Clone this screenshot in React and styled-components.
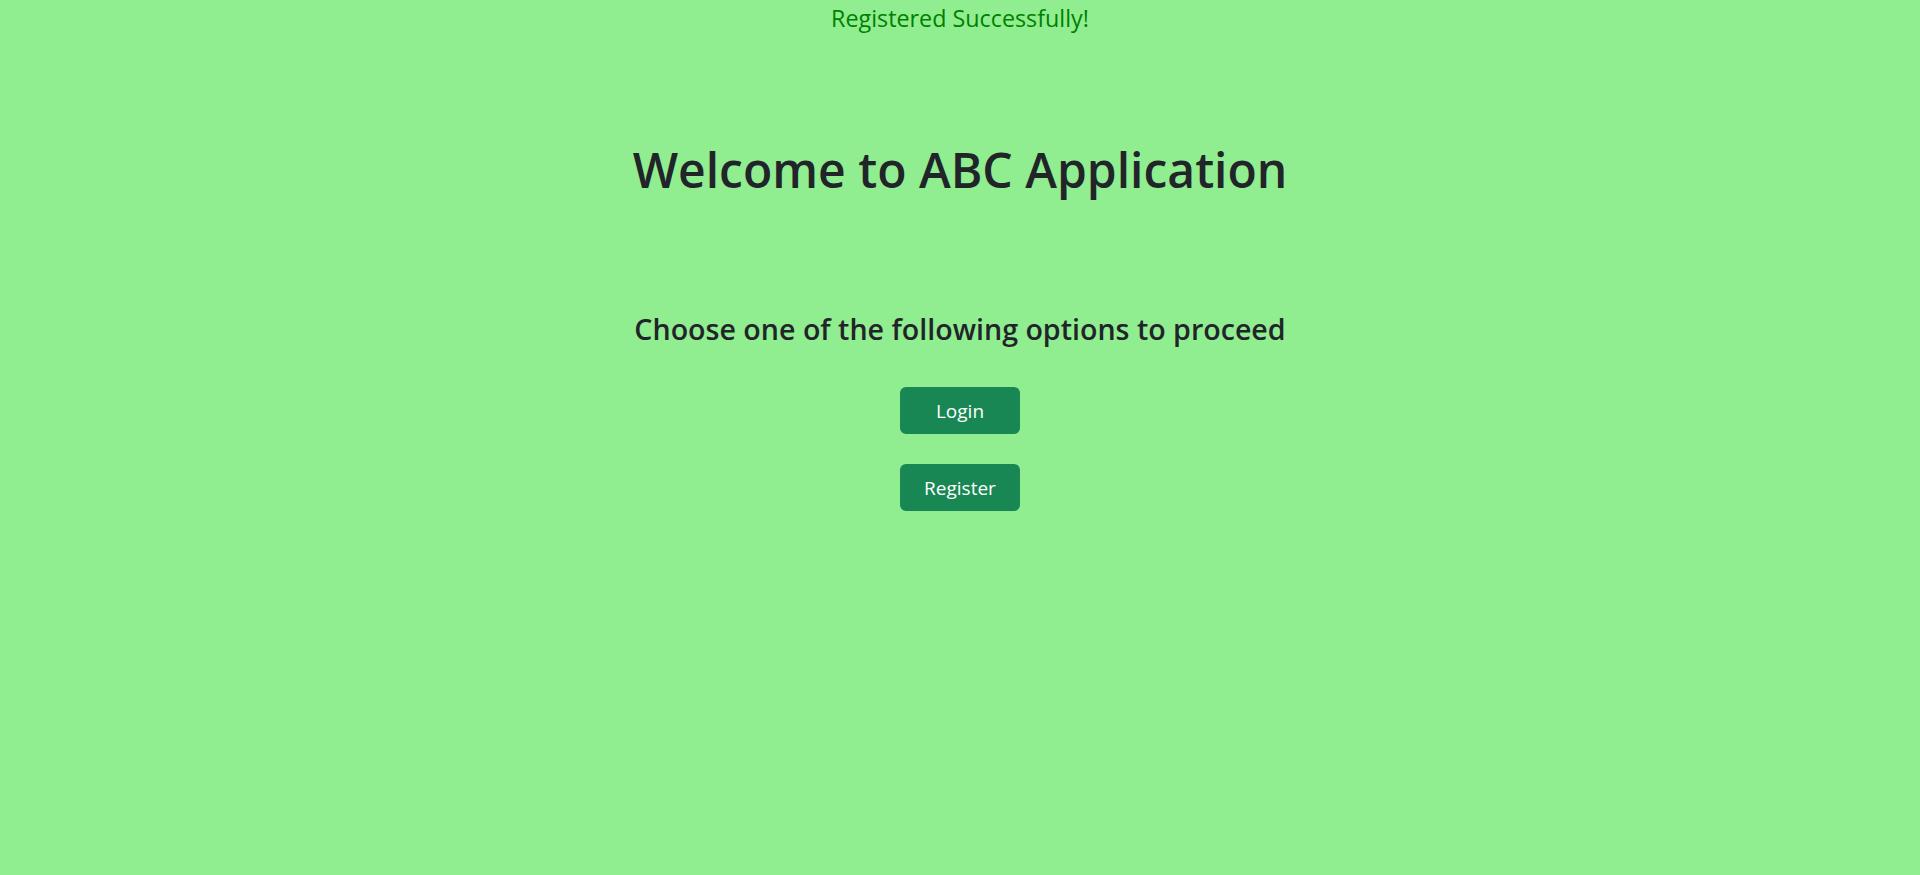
import React from 'react';
import styled, { createGlobalStyle } from 'styled-components';

const GlobalStyle = createGlobalStyle`
  html, body {
    margin: 0;
    padding: 0;
    background: #90ee90;
    font-family: "Open Sans", "Noto Sans", sans-serif;
    color: #212529;
  }
`;

const Page = styled.div`
  display: flex;
  flex-direction: column;
  align-items: center;
  min-height: 875px;
`;

const Notice = styled.p`
  margin: 0;
  font-size: 23.3px;
  line-height: 37px;
  color: #008000;
`;

const Title = styled.h1`
  margin: 103px 0 0;
  font-size: 48px;
  line-height: 60px;
  font-weight: 600;
`;

const Subtitle = styled.h4`
  margin: 111px 0 0;
  font-size: 28.6px;
  line-height: 36px;
  font-weight: 600;
`;

const Actions = styled.div`
  display: flex;
  flex-direction: column;
  align-items: center;
  gap: 30px;
  margin-top: 40px;
`;

const ActionButton = styled.button`
  width: 120px;
  height: 47px;
  border: none;
  border-radius: 6px;
  background: #198754;
  color: #fff;
  font-family: inherit;
  font-size: 19px;
  cursor: pointer;
  &:hover {
    background: #157347;
  }
`;

const App = () => {
  return (
    <Page>
      <GlobalStyle />
      <Notice>Registered Successfully!</Notice>
      <Title>Welcome to ABC Application</Title>
      <Subtitle>Choose one of the following options to proceed</Subtitle>
      <Actions>
        <ActionButton>Login</ActionButton>
        <ActionButton>Register</ActionButton>
      </Actions>
    </Page>
  );
};

export default App;
